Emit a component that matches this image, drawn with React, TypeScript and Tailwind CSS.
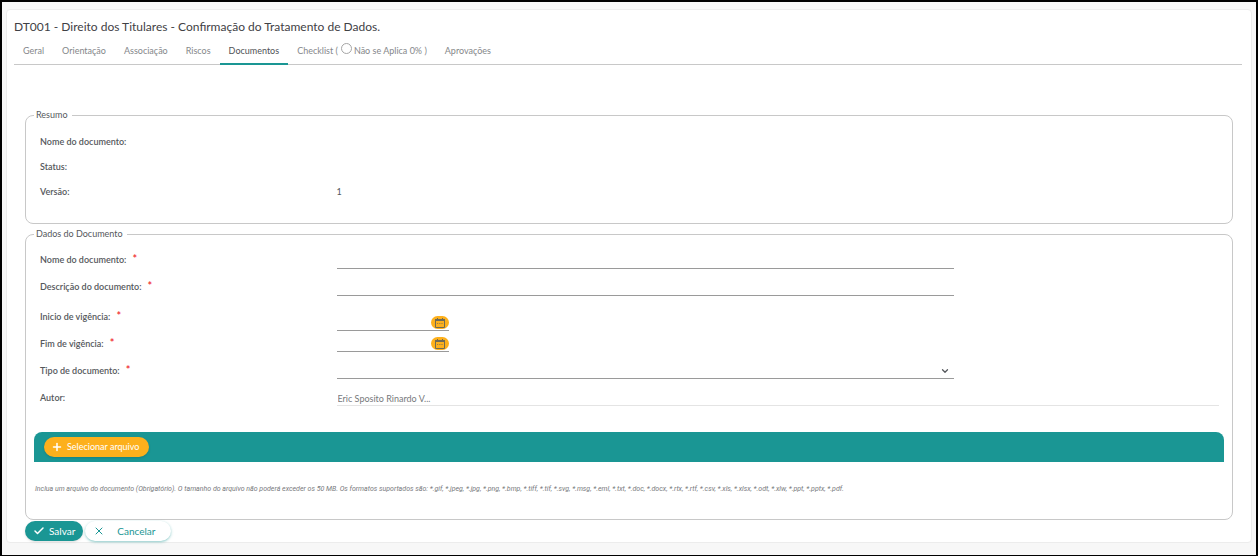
import { Plus, Check, X, ChevronDown } from 'lucide-react';

interface Tab {
  id: string;
  label: string;
}

const leadingTabs: Tab[] = [
  { id: 'geral', label: 'Geral' },
  { id: 'orientacao', label: 'Orientação' },
  { id: 'associacao', label: 'Associação' },
  { id: 'riscos', label: 'Riscos' },
  { id: 'documentos', label: 'Documentos' },
];

const summary = [
  { label: 'Nome do documento:', value: '' },
  { label: 'Status:', value: '' },
  { label: 'Versão:', value: '1' },
];

const formats =
  '*.gif, *.jpeg, *.jpg, *.png, *.bmp, *.tiff, *.tif, *.svg, *.msg, *.eml, *.txt, *.doc, *.docx, *.rtx, *.rtf, *.csv, *.xls, *.xlsx, *.odt, *.xlw, *.ppt, *.pptx, *.pdf.';

function CalendarGlyph() {
  return (
    <svg viewBox="0 0 12 12" className="h-3 w-3" fill="none" stroke="#6f6a55">
      <path d="M1.5 2.5h9v8h-9z" />
      <path d="M1 3h10" strokeWidth="2" />
      <path d="M3.5 1v2M8.5 1v2" />
      <path d="M3 6.5h6" strokeDasharray="1.2 1" strokeWidth="0.7" />
    </svg>
  );
}

function FieldLabel({ htmlFor, text, required }: { htmlFor: string; text: string; required?: boolean }) {
  return (
    <label htmlFor={htmlFor} className="w-1/4 px-[6px] pt-[5px] text-[9px] leading-4 font-semibold text-[#55585c]">
      {text}
      {required && <span className="ml-[6px] text-[11px] leading-3 text-[#f0282d]">*</span>}
    </label>
  );
}

function DateField({ id, text, tall }: { id: string; text: string; tall?: boolean }) {
  return (
    <div className={tall ? 'mt-[3px] flex h-[27px]' : 'flex h-[27px]'}>
      <FieldLabel htmlFor={id} text={text} required />
      <div className="flex-1 px-[5px]">
        <div className={`flex w-28 items-end border-b border-[#9a9a9a] ${tall ? 'h-[27px]' : 'h-[21px]'}`}>
          <input id={id} type="text" className="h-5 min-w-0 flex-1 text-[10px] outline-none" />
          <button type="button" aria-label={`Escolher ${text}`} className="mb-px flex h-[13px] w-[18px] items-center justify-center rounded-full bg-[#fdb01c]">
            <CalendarGlyph />
          </button>
        </div>
      </div>
    </div>
  );
}

export default function App() {
  return (
    <div className="border-2 border-black bg-[#f7f7f7] px-1 pt-[7px] pb-3 font-['Lato',sans-serif] text-[#55585c]">
      <main className="rounded-sm border border-[#ececec] bg-white pt-[7px] pr-[9px] pl-[7px]">
        <h1 className="text-[12px] leading-5 text-[#3f4145]">
          DT001 - Direito dos Titulares - Confirmação do Tratamento de Dados.
        </h1>

        <nav className="flex h-[28px] border-b border-[#c8c8c8] text-[9px] leading-4 text-[#85878a]">
          {leadingTabs.map((tab) => (
            <a
              key={tab.id}
              href={`#${tab.id}`}
              className={
                tab.id === 'documentos'
                  ? '-mb-px border-b-2 border-[#1a9694] px-[9px] pt-[6px] text-[#4f5256]'
                  : 'px-[9px] pt-[6px]'
              }
            >
              {tab.label}
            </a>
          ))}
          <div className="flex px-[9px] pt-[6px]">
            <a href="#checklist">Checklist (</a>
            <label className="flex">
              <input type="radio" name="naoSeAplica" className="mr-[2px] ml-[3px] h-[11px] w-[11px] appearance-none rounded-full border border-[#a5a5a5]" />
              Não se Aplica 0% )
            </label>
          </div>
          <a href="#aprovacoes" className="px-[9px] pt-[6px]">Aprovações</a>
        </nav>

        <form className="pt-11 pr-[9px] pl-[11px]">
          <fieldset className="rounded-lg border border-[#c8c8c8] px-2 pb-[19px]">
            <legend className="px-[2px] pr-1 text-[9px] leading-3">Resumo</legend>
            <dl className="pt-2">
              {summary.map((item) => (
                <div key={item.label} className="flex h-[25px] items-center text-[9px] leading-4">
                  <dt className="w-1/4 px-[6px] font-semibold">{item.label}</dt>
                  <dd className="px-[5px]">{item.value}</dd>
                </div>
              ))}
            </dl>
          </fieldset>

          <fieldset className="mt-1 rounded-lg border border-[#c8c8c8] px-2 pb-6">
            <legend className="px-[2px] pr-1 text-[9px] leading-3">Dados do Documento</legend>
            <div className="pt-[7px]">
              <div className="flex h-[27px]">
                <FieldLabel htmlFor="nome" text="Nome do documento:" required />
                <div className="flex-1 px-[5px]">
                  <input id="nome" type="text" className="block h-[22px] w-[70%] border-b border-[#9a9a9a] text-[10px] outline-none" />
                </div>
              </div>
              <div className="flex h-[27px]">
                <FieldLabel htmlFor="descricao" text="Descrição do documento:" required />
                <div className="flex-1 px-[5px]">
                  <input id="descricao" type="text" className="block h-[22px] w-[70%] border-b border-[#9a9a9a] text-[10px] outline-none" />
                </div>
              </div>
              <DateField id="inicio" text="Inicio de vigência:" tall />
              <DateField id="fim" text="Fim de vigência:" />
              <div className="flex h-[27px]">
                <FieldLabel htmlFor="tipo" text="Tipo de documento:" required />
                <div className="flex-1 px-[5px]">
                  <div className="relative w-[70%]">
                    <select id="tipo" className="block h-[21px] w-full appearance-none border-b border-[#9a9a9a] text-[10px] outline-none">
                      <option value=""></option>
                    </select>
                    <ChevronDown className="pointer-events-none absolute top-2 right-1 h-[10px] w-[10px]" strokeWidth={3} />
                  </div>
                </div>
              </div>
              <div className="flex h-[27px]">
                <FieldLabel htmlFor="autor" text="Autor:" />
                <div className="flex-1 px-[5px]">
                  <input
                    id="autor"
                    type="text"
                    readOnly
                    defaultValue="Eric Sposito Rinardo V..."
                    className="block h-[21px] w-full border-b border-[#e4e4e4] pt-[6px] pl-px text-[9px] text-[#77797c] outline-none"
                  />
                </div>
              </div>
            </div>

            <div className="mt-5 flex h-[30px] items-center rounded-t-lg bg-[#1a9694] px-[10px]">
              <button type="button" className="flex h-5 items-center gap-1 rounded-full bg-[#fdb01c] pr-[10px] pl-[7px] text-[9px] text-white shadow">
                <Plus className="h-3 w-3" strokeWidth={3} />
                Selecionar arquivo
              </button>
            </div>
            <p className="px-px pt-[21px] font-['Roboto',sans-serif] text-[7px] leading-3 text-[#77797c] italic">
              Inclua um arquivo do documento (Obrigatório). O tamanho do arquivo não poderá exceder os 50 MB. Os formatos
              suportados são: {formats}
            </p>
          </fieldset>

          <div className="flex gap-[2px] pt-px pb-px">
            <button type="submit" className="flex h-5 items-center gap-1 rounded-full bg-[#1a9694] px-2 text-[10px] text-white shadow">
              <Check className="h-3 w-3" strokeWidth={3} />
              Salvar
            </button>
            <button type="button" className="flex h-5 w-[86px] items-center rounded-full bg-white px-2 text-[10px] text-[#1a9694] shadow-sm shadow-[#1a9694]/40">
              <X className="h-3 w-3" />
              <span className="flex-1 pl-1 text-center">Cancelar</span>
            </button>
          </div>
        </form>
      </main>
    </div>
  );
}
